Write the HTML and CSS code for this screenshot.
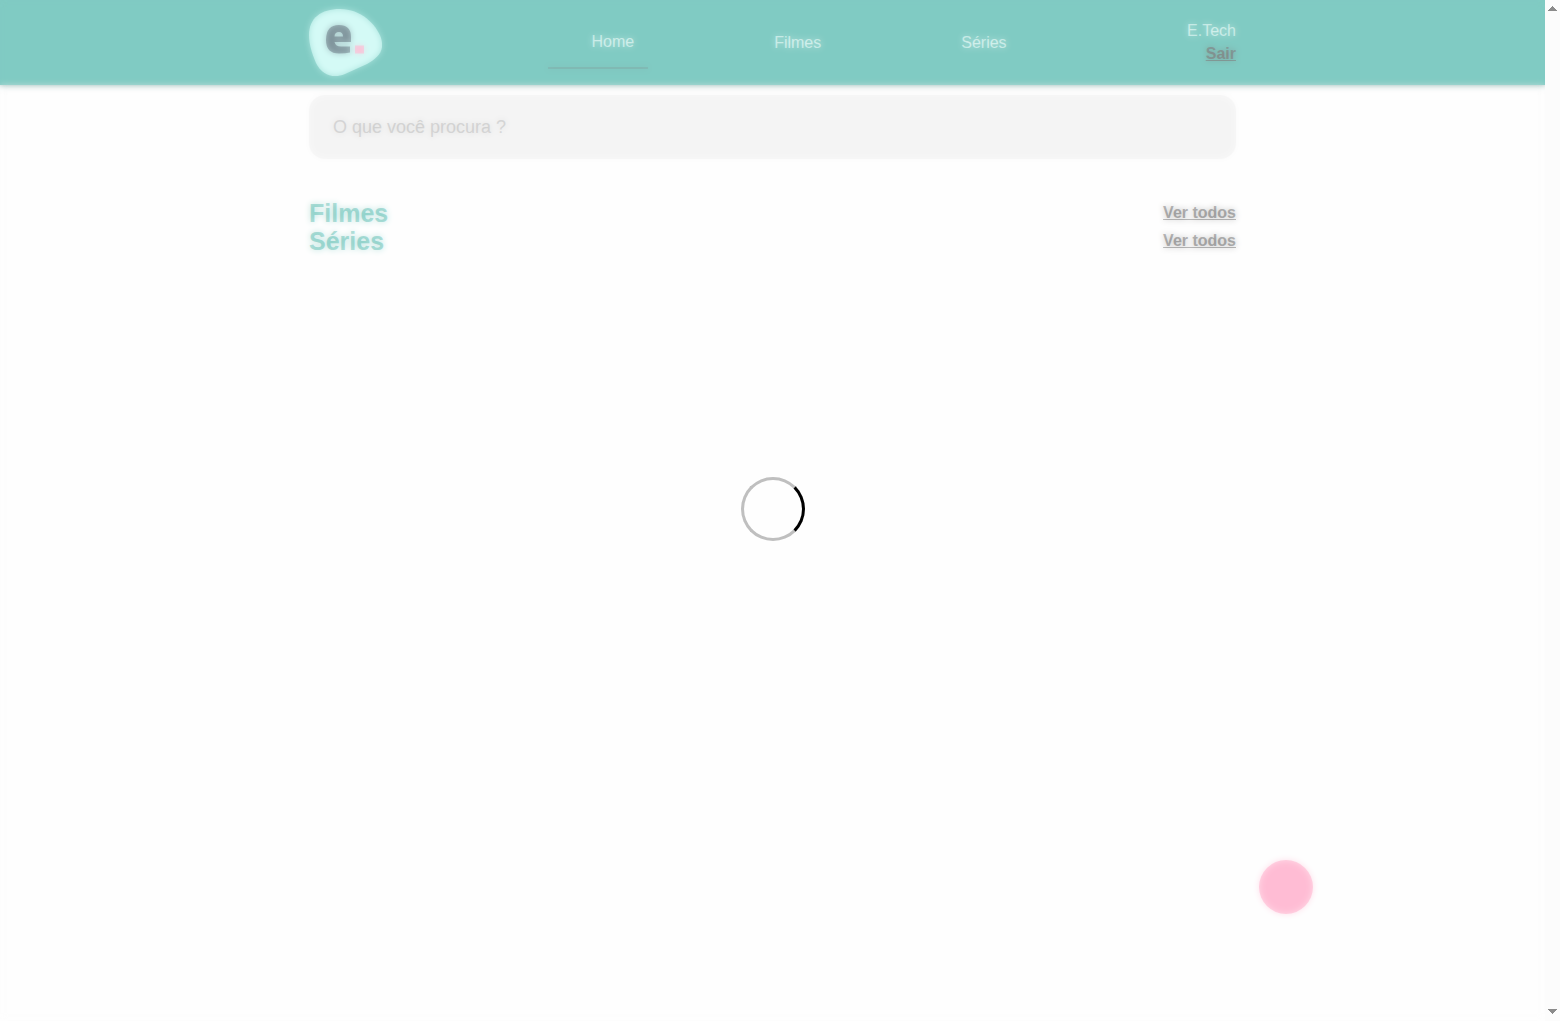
FILE: index.html
```html
<!DOCTYPE html>
<html lang="pt-BR">
<head>
<meta charset="utf-8">
<title>E.Tech</title>
<link rel="stylesheet" href="styles.css">
</head>
<body>
<header class="header">
  <div class="container header-inner">
    <a class="logo" href="#" aria-label="E.Tech">
      <svg width="73" height="68" viewBox="0 0 73 68" aria-hidden="true">
        <path fill="#d4faf6" d="M0 26C0 9 12 0 31 0C52 0 67 15 72 29C76 42 69 49 58 55L36 65C24 70 13 66 7 54C3 45 0 35 0 26Z"/>
        <path fill="#7c9098" fill-rule="evenodd" d="M42 33H25.500Q26.500 37.500 32 37.500H41V43.500Q37 44.500 30 44.500Q17 44.500 17 31Q17 16 30 16Q42 16 42 28ZM25.500 27.500H34Q34 23 30 23Q25.500 23 25.500 27.500Z"/>
        <path fill="#ffbdd4" d="M46 36.500H55V44.500H46Z"/>
      </svg>
    </a>
    <nav class="nav">
      <a class="nav-link nav-link-active" href="#">Home</a>
      <a class="nav-link" href="#filmes">Filmes</a>
      <a class="nav-link" href="#series">Séries</a>
    </nav>
    <div class="user">
      <span>E.Tech</span>
      <a class="logout" href="#">Sair</a>
    </div>
  </div>
</header>
<main class="container">
  <input class="search" type="search" aria-label="Procurar" placeholder="O que você procura ?">
  <section class="row" id="filmes">
    <h2 class="row-title">Filmes</h2>
    <a class="row-link" href="#">Ver todos</a>
  </section>
  <section class="row" id="series">
    <h2 class="row-title">Séries</h2>
    <a class="row-link" href="#">Ver todos</a>
  </section>
</main>
<button class="fab" type="button" aria-label="Adicionar"></button>
<div class="overlay"></div>
<div class="loading" role="status" aria-label="Carregando"><div class="spinner"></div></div>
<div class="scrollbar" aria-hidden="true">
  <svg width="15" height="16" viewBox="0 0 15 16" shape-rendering="crispEdges"><path fill="#8b8b8b" d="M3 11L7.500 6L12 11Z"/></svg>
  <svg width="15" height="16" viewBox="0 0 15 16" shape-rendering="crispEdges"><path fill="#8b8b8b" d="M3 4L7.500 9L12 4Z"/></svg>
</div>
</body>
</html>
```
FILE: styles.css
```css
* {
  box-sizing: border-box;
}

body {
  min-height: 100vh;
  margin: 0;
  padding-right: 15px;
  background: #fefefe;
  font: 16px/20px "Liberation Sans", Arial, sans-serif;
}

.container {
  width: 60%;
  margin: 0 auto;
}

.header {
  background: #80cbc3;
  box-shadow: 0 0 5px rgba(0, 0, 0, 0.3);
}

.header-inner {
  display: flex;
  align-items: center;
  justify-content: space-between;
  height: 85px;
}

.logo svg {
  display: block;
}

.nav {
  display: flex;
  align-items: center;
  gap: 140px;
  margin-right: 14px;
}

.nav-link {
  color: #f4fffd;
  text-decoration: none;
}

.nav-link-active {
  margin-right: -14px;
  padding: 15px 14px 15px 43px;
  border-bottom: 2px solid #80aeab;
}

.user {
  display: flex;
  flex-direction: column;
  align-items: flex-end;
  gap: 3px;
  color: #f4fffd;
}

.logout {
  color: #807c7c;
  font-weight: 700;
}

.search {
  display: block;
  width: 100%;
  height: 64px;
  margin: 10px 0 40px;
  padding: 0 24px;
  border: 0;
  border-radius: 16px;
  background: #f4f4f4;
  font: inherit;
  font-size: 18px;
  appearance: none;
}

.search::placeholder {
  color: #c0c0c0;
}

.row {
  display: flex;
  align-items: center;
  justify-content: space-between;
}

.row-title {
  margin: 0;
  color: #78c8bf;
  font-size: 25px;
  line-height: 28px;
}

.row-link {
  color: #808080;
  font-weight: 700;
}

.fab {
  position: fixed;
  right: calc(15% + 13px);
  bottom: 107px;
  width: 54px;
  height: 54px;
  border: 0;
  border-radius: 50%;
  background: #ffbdd4;
}

.overlay {
  position: fixed;
  inset: 0 15px 0 0;
  opacity: 0.5;
  backdrop-filter: blur(3px);
}

.loading {
  position: fixed;
  inset: 0 15px 3px 0;
  display: flex;
  align-items: center;
  justify-content: center;
}

.spinner {
  width: 64px;
  height: 64px;
  border: 3px solid #bfbfbf;
  border-right-color: #000;
  border-radius: 50%;
}

.scrollbar {
  position: fixed;
  inset: 0 0 0 auto;
  display: flex;
  flex-direction: column;
  justify-content: space-between;
  width: 15px;
  background: #fcfcfc;
}
```
